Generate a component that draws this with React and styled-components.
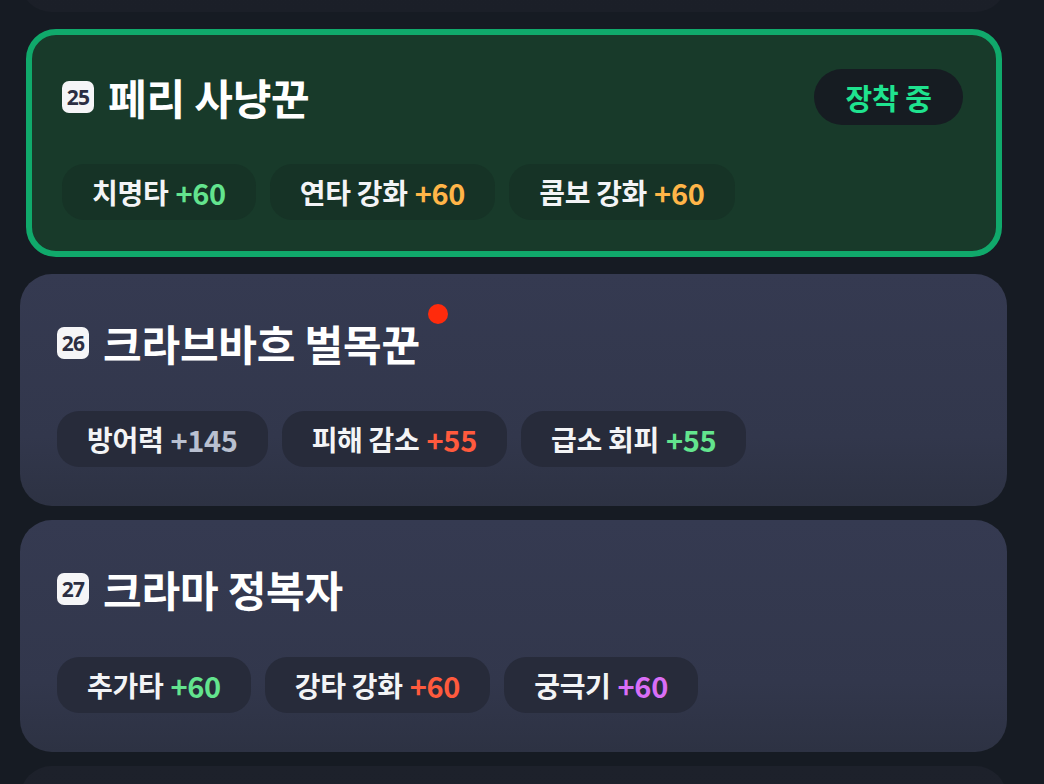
import React from "react";
import styled, { createGlobalStyle, css } from "styled-components";

const Global = createGlobalStyle`
  html, body {
    margin: 0;
    padding: 0;
    background: #161b23;
  }
  body {
    font-family: "Noto Sans CJK KR", "Noto Sans", sans-serif;
    -webkit-font-smoothing: antialiased;
  }
`;

const Viewport = styled.div`
  height: 784px;
  overflow: hidden;
  background: #161b23;
`;

const List = styled.div`
  display: flex;
  flex-direction: column;
  gap: 14px;
  padding: 0 37px 0 20px;
  margin-top: -220px;
`;

const Card = styled.section`
  box-sizing: border-box;
  flex: none;
  height: 232px;
  border-radius: 32px;
  padding: 41px 40px 39px 37px;
  display: flex;
  flex-direction: column;
  gap: 40px;
  background: linear-gradient(180deg, #353a51 0%, #32374c 70%, #2d3243 100%);

  ${(p) =>
    p.$variant === "equipped" &&
    css`
      height: 228px;
      margin: 3px 5px 3px 6px;
      border: 6px solid #10a96b;
      border-radius: 30px;
      padding: 34px 33px 32px 30px;
      gap: 39px;
      background: #183a2a;
    `}
`;

const DimCard = styled.div`
  flex: none;
  height: 232px;
  border-radius: 32px;
  background: linear-gradient(180deg, #1d212b 0%, #1b1f28 100%);
`;

const Header = styled.div`
  display: flex;
  align-items: center;
  min-height: 56px;
`;

const NumBadge = styled.span`
  flex: none;
  width: 32px;
  height: 32px;
  border-radius: 7px;
  background: #f5f5f7;
  color: #2b2e42;
  display: flex;
  align-items: center;
  justify-content: center;
  font-family: "Noto Sans", "Noto Sans CJK KR", sans-serif;
  font-weight: 700;
  font-size: 21px;
  letter-spacing: -0.8px;
  line-height: 1;
`;

const Title = styled.h2`
  position: relative;
  margin: 0 0 0 14px;
  font-size: 42px;
  line-height: 46px;
  font-weight: 700;
  color: #ffffff;
  letter-spacing: -0.2px;
`;

const Dot = styled.span`
  position: absolute;
  right: -28px;
  top: -16px;
  width: 20px;
  height: 20px;
  border-radius: 50%;
  background: #ff2b0c;
`;

const Equipped = styled.span`
  margin-left: auto;
  height: 56px;
  padding: 0 31px;
  border-radius: 28px;
  background: #161c22;
  color: #1fe38f;
  display: flex;
  align-items: center;
  font-size: 29px;
  font-weight: 700;
`;

const ChipRow = styled.div`
  display: flex;
  gap: 14px;
`;

const Chip = styled.span`
  height: 56px;
  padding: 0 30px;
  border-radius: 22px;
  background: ${(p) => (p.$equipped ? "#163326" : "#272b3a")};
  display: inline-flex;
  align-items: center;
  font-size: 28px;
  font-weight: 700;
  color: #f3f4f6;
  white-space: nowrap;
  letter-spacing: -0.3px;
`;

const Value = styled.span`
  margin-left: 7px;
  font-size: 29px;
  color: ${(p) => p.$color};
`;

const COLORS = {
  green: "#63e48e",
  orange: "#ffb548",
  red: "#ff5a3d",
  gray: "#b9c0d0",
  purple: "#d96ef6",
};

const cards = [
  { no: 24, variant: "dim" },
  {
    no: 25,
    name: "페리 사냥꾼",
    variant: "equipped",
    stats: [
      ["치명타", "+60", "green"],
      ["연타 강화", "+60", "orange"],
      ["콤보 강화", "+60", "orange"],
    ],
  },
  {
    no: 26,
    name: "크라브바흐 벌목꾼",
    dot: true,
    stats: [
      ["방어력", "+145", "gray"],
      ["피해 감소", "+55", "red"],
      ["급소 회피", "+55", "green"],
    ],
  },
  {
    no: 27,
    name: "크라마 정복자",
    stats: [
      ["추가타", "+60", "green"],
      ["강타 강화", "+60", "red"],
      ["궁극기", "+60", "purple"],
    ],
  },
  { no: 28, variant: "dim" },
];

export default function App() {
  return (
    <>
      <Global />
      <Viewport>
        <List>
          {cards.map((c) => {
            if (c.variant === "dim") return <DimCard key={c.no} />;
            const equipped = c.variant === "equipped";
            return (
              <Card key={c.no} $variant={c.variant}>
                <Header>
                  <NumBadge>{c.no}</NumBadge>
                  <Title>
                    {c.name}
                    {c.dot && <Dot />}
                  </Title>
                  {equipped && <Equipped>장착 중</Equipped>}
                </Header>
                <ChipRow>
                  {c.stats.map(([label, val, col]) => (
                    <Chip key={label} $equipped={equipped}>
                      {label}
                      <Value $color={COLORS[col]}>{val}</Value>
                    </Chip>
                  ))}
                </ChipRow>
              </Card>
            );
          })}
        </List>
      </Viewport>
    </>
  );
}
